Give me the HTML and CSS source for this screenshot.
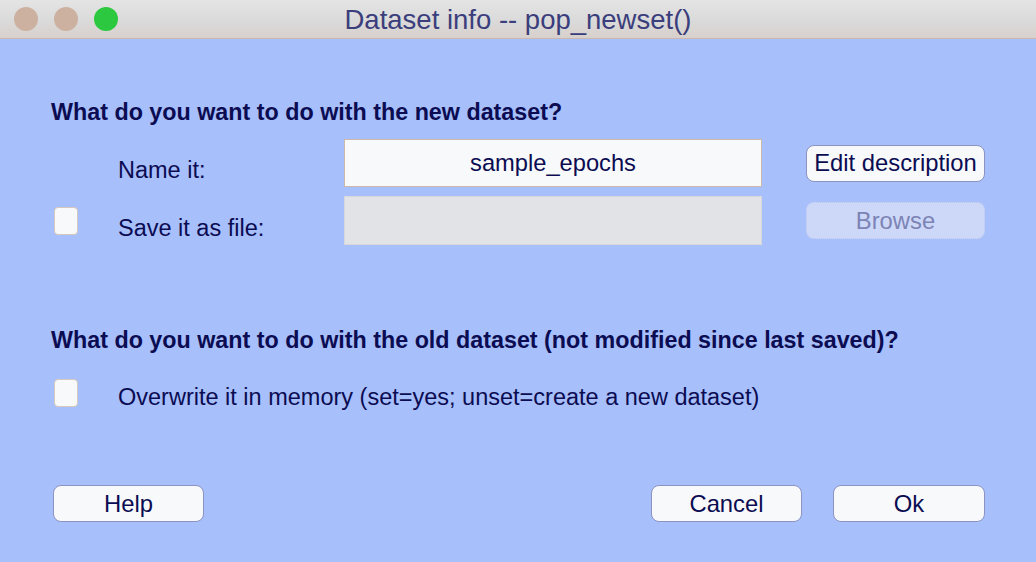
FILE: index.html
```html
<!DOCTYPE html>
<html>
<head>
<meta charset="utf-8">
<link rel="stylesheet" href="styles.css">
</head>
<body>
<div class="window">
  <div class="titlebar">
    <div class="lights">
      <span class="light tan"></span>
      <span class="light tan"></span>
      <span class="light green"></span>
    </div>
    <div class="title">Dataset info -- pop_newset()</div>
    <div></div>
  </div>
  <div class="content">
    <h2 class="heading h1">What do you want to do with the new dataset?</h2>
    <div class="grid">
      <div></div>
      <div class="label">Name it:</div>
      <div class="field">sample_epochs</div>
      <div></div>
      <div class="btn">Edit description</div>

      <div class="checkbox"></div>
      <div class="label">Save it as file:</div>
      <div class="field disabled"></div>
      <div></div>
      <div class="btn disabled">Browse</div>
    </div>
    <h2 class="heading h2">What do you want to do with the old dataset (not modified since last saved)?</h2>
    <div class="checkrow">
      <div class="checkbox"></div>
      <div class="label">Overwrite it in memory (set=yes; unset=create a new dataset)</div>
    </div>
    <div class="footer">
      <div class="btn wide">Help</div>
      <div class="right">
        <div class="btn wide">Cancel</div>
        <div class="btn wide">Ok</div>
      </div>
    </div>
  </div>
</div>
</body>
</html>
```

FILE: styles.css
```css
* { box-sizing: border-box; }
html, body { margin: 0; padding: 0; }
body {
  width: 1036px;
  height: 562px;
  overflow: hidden;
  background: #a7bffb;
  font-family: "Liberation Sans", Arial, sans-serif;
  color: #0b0c52;
}
.window { width: 1036px; height: 562px; display: flex; flex-direction: column; }
.titlebar {
  height: 39px;
  display: grid;
  grid-template-columns: 1fr auto 1fr;
  align-items: center;
  background: linear-gradient(#e4e4e4 0%, #dadada 55%, #d8d0cc 100%);
  border-bottom: 1px solid #c9b8ae;
}
.lights { display: flex; gap: 16px; padding-left: 14px; }
.light { width: 24px; height: 24px; border-radius: 50%; display: block; }
.light.tan { background: #cdb1a0; }
.light.green { background: #2bc840; }
.title { font-size: 27.5px; line-height: 30px; color: #3b3e7c; padding-top: 1px; }
.content { padding: 61px 51px 0 51px; display: flex; flex-direction: column; }
.heading { margin: 0; font-size: 23.3px; line-height: 24px; font-weight: bold; color: #0b0c52; }
.grid {
  margin-top: 15px;
  margin-left: 3px;
  display: grid;
  grid-template-columns: 64px 226px 418px 44px 179px;
  grid-template-rows: 48px 49px;
  row-gap: 9px;
  align-items: center;
}
.label { font-size: 23.5px; line-height: 24px; padding-top: 14px; white-space: nowrap; }
.field {
  height: 100%;
  background: #f8f9fa;
  border: 1px solid #cdb9a7;
  display: flex; align-items: center; justify-content: center;
  font-size: 23.7px;
  padding-top: 1px;
}
.field.disabled {
  background: #e2e3e6;
  border-color: #d8d8dc;
}
.btn {
  height: 37px;
  background: #f8f9fa;
  border: 1px solid #8c93c0;
  border-radius: 8px;
  display: flex; align-items: center; justify-content: center;
  font-size: 23.8px;
  white-space: nowrap;
}
.btn.disabled {
  background: #cdd8f9;
  color: #7c83b5;
  border: 1px dotted #b8c4ec;
}
.checkbox {
  width: 24px; height: 28px;
  background: #f8f9fa;
  border: 1px solid #d6c8bb;
  border-radius: 4px;
}
.h2 { margin-top: 83px; }
.checkrow {
  margin-top: 25px;
  margin-left: 3px;
  display: grid;
  grid-template-columns: 64px auto;
  align-items: center;
}
.checkrow .label { padding-top: 8px; }
.footer {
  margin-top: 76px;
  margin-left: 2px;
  width: 932px;
  display: flex; justify-content: space-between;
}
.right { display: flex; gap: 31px; }
.btn.wide { width: 151px; }
.right .btn.wide:last-child { width: 152px; }
```
